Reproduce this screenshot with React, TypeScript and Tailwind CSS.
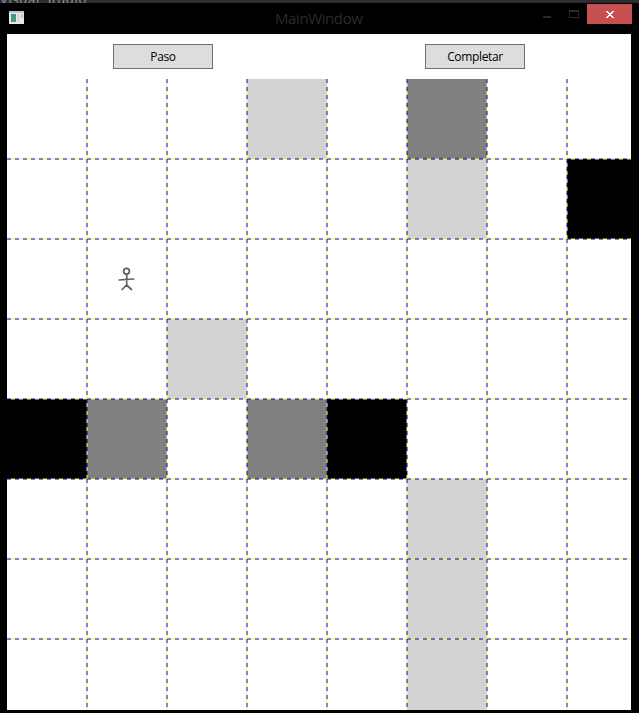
const shades: Record<string, string> = {
  "0-3": "bg-[#d3d3d3]",
  "0-5": "bg-[#808080]",
  "1-5": "bg-[#d3d3d3]",
  "1-7": "bg-black",
  "3-2": "bg-[#d3d3d3]",
  "4-0": "bg-black",
  "4-1": "bg-[#808080]",
  "4-3": "bg-[#808080]",
  "4-4": "bg-black",
  "5-5": "bg-[#d3d3d3]",
  "6-5": "bg-[#d3d3d3]",
  "7-5": "bg-[#d3d3d3]",
};

const indexes = [0, 1, 2, 3, 4, 5, 6, 7];
const lines = [1, 2, 3, 4, 5, 6, 7];

function StickFigure() {
  return (
    <svg width="20" height="28" viewBox="0 0 20 28" fill="none" stroke="#606060" strokeWidth="1.7" strokeLinecap="round">
      <circle cx="9.5" cy="6.3" r="2.9" />
      <path d="M9.7 9.5V20M2.2 15l14.6-1M9.5 20l-4.3 4.5M9.5 20l5 4.5" />
    </svg>
  );
}

function TitleBar() {
  return (
    <header className="relative flex h-[31px] items-start justify-between">
      <svg className="ml-[9px] mt-2" width="15" height="13" shapeRendering="crispEdges">
        <rect width="15" height="13" fill="#e8e8e8" />
        <rect width="15" height="2" fill="#c4c4c4" />
        <rect x="2" y="3" width="5" height="8" fill="#4a9a82" />
        <rect x="2" y="3" width="5" height="3" fill="#4b8aa6" />
        <rect x="8" y="3" width="3" height="8" fill="#d8dada" />
        <rect x="12" y="3" width="2" height="4" fill="#a5cfae" />
      </svg>
      <h1 className="absolute left-[275px] top-[4px] whitespace-nowrap text-[15px] leading-[22px] tracking-[-0.4px] text-[#2b2b2b]">
        MainWindow
      </h1>
      <div className="mr-[7px] mt-px flex">
        <svg width="45" height="20" shapeRendering="crispEdges">
          <rect x="1" y="12" width="8" height="2" fill="#2b2b2b" />
          <path d="M27 6h10v8H27zM28 8v5h8V8z" fill="#2b2b2b" fillRule="evenodd" />
        </svg>
        <button className="flex h-5 w-[45px] items-start bg-[#c75050] pl-[19px] pt-[7px]" aria-label="Cerrar">
          <svg width="8" height="7" viewBox="0 0 8 7" shapeRendering="crispEdges" fill="#fff">
            <path d="M0 0h2v1h1v1h2V1h1V0h2v1H7v1H6v1H5v1h1v1h1v1h1v1H6V6H5V5H3v1H2v1H0V6h1V5h1V4h1V3H2V2H1V1H0z" />
          </svg>
        </button>
      </div>
    </header>
  );
}

function Board() {
  return (
    <div className="relative h-[631px] overflow-hidden">
      <div className="grid w-[640px] grid-cols-8">
        {indexes.map((row) =>
          indexes.map((col) => (
            <div key={`${row}-${col}`} className={`h-20 ${shades[`${row}-${col}`] ?? ""}`}>
              {row === 2 && col === 1 && (
                <div className="pl-[30px] pt-[26px]">
                  <StickFigure />
                </div>
              )}
            </div>
          ))
        )}
      </div>
      {lines.map((n) => (
        <div
          key={`h${n}`}
          className="absolute left-0 h-0.5 w-full bg-[repeating-linear-gradient(90deg,#0000ff_0px,#0000ff_4px,#ffff00_4px,#ffff00_8px)] opacity-50"
          style={{ top: n * 80 - 1 }}
        />
      ))}
      {lines.map((n) => (
        <div
          key={`v${n}`}
          className="absolute top-0 h-full w-0.5 bg-[repeating-linear-gradient(180deg,#0000ff_0px,#0000ff_4px,#ffff00_4px,#ffff00_8px)] opacity-50"
          style={{ left: n * 80 - 1 }}
        />
      ))}
    </div>
  );
}

export default function App() {
  return (
    <div className="h-[713px] w-[639px] overflow-hidden bg-black font-['Open_Sans','Noto_Sans',sans-serif]">
      <div className="h-[3px] overflow-hidden bg-[#2d2d30]">
        <div className="-mt-[9px] text-[13px] leading-[16px] tracking-[0.7px] text-[#999]">Visual Studio</div>
      </div>
      <TitleBar />
      <main className="ml-[7px] h-[676px] w-[624px] overflow-hidden bg-white">
        <div className="flex h-[45px] items-start pl-[106px] pt-2.5 text-[12px] leading-none tracking-[-0.35px] text-black">
          <button className="flex h-[25px] w-[100px] items-center justify-center border border-[#707070] bg-[#dddddd]">Paso</button>
          <button className="ml-[212px] flex h-[25px] w-[100px] items-center justify-center border border-[#707070] bg-[#dddddd]">Completar</button>
        </div>
        <Board />
      </main>
    </div>
  );
}
